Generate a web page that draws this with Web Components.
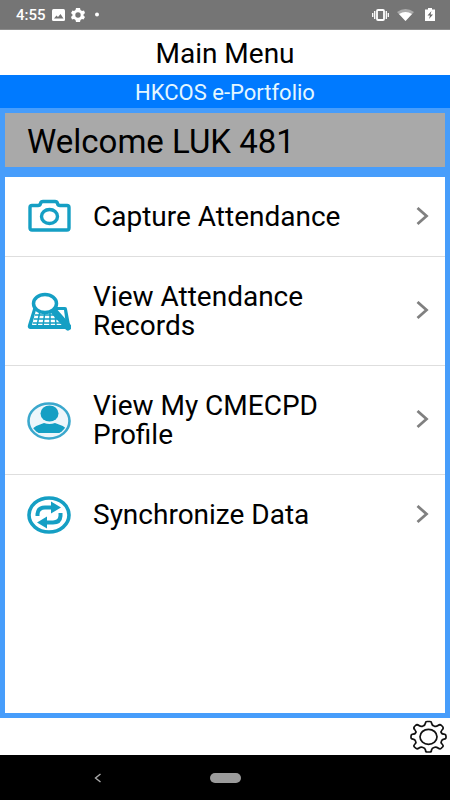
<!DOCTYPE html>
<html lang="en">
<head>
<meta charset="utf-8">
<meta name="viewport" content="width=device-width, initial-scale=1">
<title>Main Menu</title>
<style>
  html, body { height: 100%; }
  body { margin: 0; background: #fff; color: #000; font-family: Roboto, "Noto Sans", sans-serif; }
</style>
</head>
<body>
<portfolio-app>
  <status-bar slot="status" time="4:55"></status-bar>
  <page-header slot="header">Main Menu<span slot="subtitle">HKCOS e-Portfolio</span></page-header>
  <welcome-banner>Welcome LUK 481</welcome-banner>
  <menu-list>
    <menu-item icon="camera">Capture Attendance</menu-item>
    <menu-item icon="records">View Attendance Records</menu-item>
    <menu-item icon="profile">View My CMECPD Profile</menu-item>
    <menu-item icon="sync">Synchronize Data</menu-item>
  </menu-list>
  <settings-bar slot="footer"></settings-bar>
  <navigation-bar slot="navigation"></navigation-bar>
</portfolio-app>

<script>
  const define = (name, markup, setup) => {
    const template = document.createElement('template');
    template.innerHTML = markup;
    customElements.define(name, class extends HTMLElement {
      constructor() {
        super();
        this.attachShadow({ mode: 'open' }).append(template.content.cloneNode(true));
      }
      connectedCallback() { if (setup) setup(this, this.shadowRoot); }
    });
  };

  const icons = {
    camera: `<g fill="none" stroke="#159fc4" stroke-width="3.400" stroke-linejoin="round">
      <path d="M5 11.500H11Q13 11.500 13.500 9.500Q14 7.500 16 7.500H28Q30 7.500 30.500 9.500Q31 11.500 33 11.500H40Q42 11.500 42 13.500V34Q42 36 40 36H5Q3 36 3 34V13.500Q3 11.500 5 11.500Z"/>
      <ellipse cx="22.500" cy="22.500" rx="8" ry="7"/></g>`,
    records: `<path d="M8 18H38Q40 18 40 20L43 36Q43 40 40 40H3Q0 39 1 36L6 20Q6 18 8 18Z" fill="#159fc4"/>
      <path d="M9 21H37L39 36H5Z" fill="#fff"/>
      <g stroke="#159fc4" stroke-width="1.500"><path d="M8 26H34M7 30H36M6 34H38M13 22L10 37M18 22L16 37M23 22V37M28 22L29 37"/></g>
      <path d="M26 21L41 38" stroke="#159fc4" stroke-width="7" stroke-linecap="round"/>
      <ellipse cx="18" cy="14.500" rx="11.500" ry="9" fill="#fff" stroke="#159fc4" stroke-width="3.500"/>`,
    profile: `<defs><clipPath id="disc"><ellipse cx="22" cy="23" rx="18" ry="15"/></clipPath></defs>
      <ellipse cx="22" cy="23" rx="20.500" ry="17.500" fill="#eef6fb" stroke="#3ba8cd" stroke-width="2.600"/>
      <g fill="#159fc4"><ellipse cx="22.500" cy="15.500" rx="9" ry="8"/>
      <path clip-path="url(#disc)" d="M5 35V31Q10 27 17 25Q22.500 27 28 25Q35 27 40 31V35Z"/></g>`,
    sync: `<ellipse cx="22" cy="23" rx="20" ry="17" fill="none" stroke="#159fc4" stroke-width="3.600"/>
      <g fill="none" stroke="#159fc4" stroke-width="4"><path d="M10.500 24V22Q11 15.500 18 15.500H25"/><path d="M33.500 21V24Q33 30.500 26 30.500H19"/></g>
      <path d="M24 9.500L34 15.500L24 21.500ZM20 24.500L10 30.500L20 36.500Z" fill="#159fc4"/>`
  };

  define('status-bar', `
    <style>
      :host { display: flex; align-items: center; height: 30px; padding: 0 15px 0 16px; box-sizing: border-box;
              background: #757575; color: #fff; font-size: 15px; line-height: 20px; font-weight: 500; border-bottom: 1px solid #8c8c8c; }
      .left, .right { display: flex; align-items: center; }
      .left { gap: 6px; } .right { gap: 8px; margin-left: auto; }
      svg { display: block; }
      .battery { margin-left: 3px; }
    </style>
    <div class="left"><time></time>
      <svg width="13" height="12" viewBox="0 0 13 12"><rect width="13" height="12" rx="1.500" fill="#fff"/><path d="M2 9.500L4.500 6.500L6 8L8.500 5L11.500 9.500Z" fill="#757575"/></svg>
      <svg width="14" height="14" viewBox="0 0 14 14"><path fill="#fff" fill-rule="evenodd" d="M5 0H9L9.500 2L11 3L13 2.500L14 5L12.500 6.500V7.500L14 9L12.500 11.500L11 11L9.500 12L9 14H5L4.500 12L3 11L1 11.500L0 9L1.500 7.500V6.500L0 5L1.500 2.500L3 3L4.500 2ZM7 4.300A2.700 2.700 0 1 0 7 9.700A2.700 2.700 0 1 0 7 4.300Z"/></svg>
      <svg width="12" height="5" viewBox="0 0 12 5"><circle cx="6" cy="2.500" r="2" fill="#fff"/></svg>
    </div>
    <div class="right">
      <svg width="17" height="12" viewBox="0 0 17 12"><rect x="5" y="1" width="7" height="10" rx="1" fill="none" stroke="#fff" stroke-width="1.800"/><path d="M2.700 2V10M.7 4V8M14.300 2V10M16.300 4V8" stroke="#fff" stroke-width="1.300"/></svg>
      <svg width="17" height="12" viewBox="0 0 17 12"><path d="M0 3Q8.500-3 17 3L8.500 12Z" fill="#aaa"/><path d="M2 5Q8.500 1 15 5L8.500 12Z" fill="#fff"/></svg>
      <svg class="battery" width="10" height="13" viewBox="0 0 10 13"><path d="M0 1.500H3V0H7V1.500H10V13H0Z" fill="#fff"/><path d="M6.500 3L2.500 7.500H5L4 11L8 6.500H5.500Z" fill="#666"/></svg>
    </div>`, (host, root) => { root.querySelector('time').textContent = host.getAttribute('time'); });

  define('page-header', `
    <style>
      :host { display: block; text-align: center; }
      h1, p { margin: 0; font-weight: 400; }
      h1 { font-size: 28px; line-height: 29px; padding: 9px 8px 7px; }
      p { background: #007aff; color: #e4f7ff; font-size: 22px; line-height: 23px; padding: 6px 8px 4px; }
    </style>
    <header><h1><slot></slot></h1><p><slot name="subtitle"></slot></p></header>`);

  define('welcome-banner', `
    <style>
      :host { display: block; }
      h2 { margin: 0; font-weight: 400; font-size: 33px; line-height: 35px; padding: 11px 22px 8px; background: #a9a9a9; }
    </style>
    <h2><slot></slot></h2>`);

  define('menu-list', `
    <style>:host { display: flex; flex-direction: column; flex: 1; background: #fff; }</style>
    <slot></slot>`, host => host.setAttribute('role', 'list'));

  define('menu-item', `
    <style>
      :host { display: block; border-bottom: 1px solid #dedede; }
      :host(:last-of-type) { border-bottom: 0; }
      button { display: flex; align-items: center; width: 100%; gap: 22px; padding: 25px 16px 25px 22px; border: 0;
               background: none; color: inherit; font: inherit; font-size: 28px; line-height: 29px; text-align: left; cursor: pointer; }
      .label { flex: 1; padding-right: 24px; }
      .icon { flex: none; margin: -8px 0; }
      .chevron { flex: none; }
    </style>
    <button type="button">
      <svg class="icon" width="44" height="45" viewBox="0 0 44 45" aria-hidden="true"></svg>
      <span class="label"><slot></slot></span>
      <svg class="chevron" width="13" height="20" viewBox="0 0 13 20" aria-hidden="true"><path d="M1.500 1L10.500 9L1.500 17" fill="none" stroke="#808080" stroke-width="2.800"/></svg>
    </button>`, (host, root) => {
      host.setAttribute('role', 'listitem');
      root.querySelector('.icon').innerHTML = icons[host.getAttribute('icon')];
    });

  define('settings-bar', `
    <style>
      :host { display: flex; justify-content: flex-end; background: #fff; padding: 2px 3px; }
      button { display: block; padding: 0; border: 0; background: none; cursor: pointer; }
      svg { display: block; }
    </style>
    <button type="button" aria-label="Settings">
      <svg width="37" height="33" viewBox="0 0 37 33"><g fill="none" stroke="#111" stroke-width="1.700" stroke-linejoin="round"><path d="M17 1.500H20Q21.500 1.500 21.500 3Q22 5.500 24 6Q26 7 28 5.500Q30 4 31.500 5.500L32.500 6.500Q34 8 32 10Q30.500 11.500 31.500 13Q32 14 34 14.200Q36 14.500 36 16V17.500Q36 19 34 19.200Q32 19.500 31.500 21Q30.500 22.500 32 24Q34 26 32.500 27L31 28.500Q30 29.500 28 28Q26 26.500 24 27.500Q22 28 21.500 30Q21.500 32 20 32H17Q15.500 32 15.500 30Q15 28 13 27.500Q11 26.500 9 28Q7 29.500 5.500 28L4.500 27Q3 26 5 24Q6.500 22.500 5.500 21Q5 19.500 3 19.200Q1 19 1 17.500V16Q1 14.500 3 14.200Q5 14 5.500 13Q6.500 11.500 5 10Q3 8 4.500 6.500L5.500 5.500Q7 4 9 5.500Q11 7 13 6Q15 5.500 15.500 3Q15.500 1.500 17 1.500Z"/><ellipse cx="18.500" cy="16.800" rx="8.500" ry="7.500"/></g></svg>
    </button>`);

  define('navigation-bar', `
    <style>
      :host { display: grid; grid-template-columns: 1fr auto 1fr; align-items: center; height: 45px; background: #000; }
      button { display: block; border: 0; padding: 0; background: none; cursor: pointer; }
      .back { justify-self: center; margin-right: 14px; }
      .home { width: 31px; height: 10px; border-radius: 5px; background: #9b9b9b; }
      svg { display: block; }
    </style>
    <button class="back" type="button" aria-label="Back"><svg width="8" height="10" viewBox="0 0 8 10"><path d="M6.500 1L1.500 5L6.500 9" fill="none" stroke="#aaa" stroke-width="1.400"/></svg></button>
    <button class="home" type="button" aria-label="Home"></button>`);

  define('portfolio-app', `
    <style>
      :host { display: flex; flex-direction: column; min-height: 100vh; }
      main { flex: 1; display: flex; flex-direction: column; gap: 10px; padding: 5px; background: #479dfb; }
    </style>
    <slot name="status"></slot>
    <slot name="header"></slot>
    <main><slot></slot></main>
    <slot name="footer"></slot>
    <slot name="navigation"></slot>`);
</script>
</body>
</html>
